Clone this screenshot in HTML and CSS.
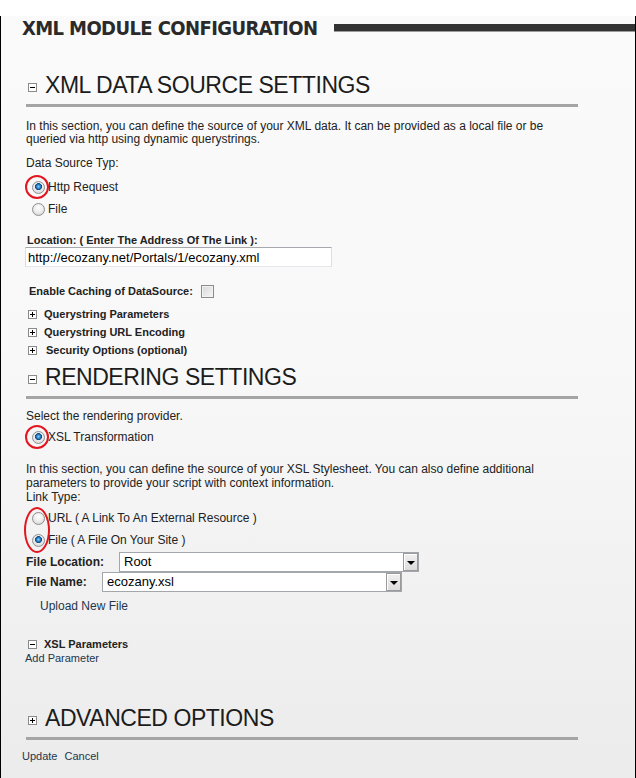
FILE: index.html
```html
<!DOCTYPE html>
<html>
<head>
<meta charset="utf-8">
<link rel="stylesheet" href="styles.css">
</head>
<body>
<div class="page">
  <div class="header">
    <h1 class="title">XML MODULE CONFIGURATION</h1>
    <div class="bar"></div>
  </div>
  <div class="content">
    <h2 class="section-head head-1"><svg class="tog-head" width="9" height="9" viewBox="0 0 9 9"><rect x="0.5" y="0.5" width="8" height="8" fill="#fff" stroke="#8a8a8a"/><path d="M2 4.5H7" stroke="#000"/></svg>XML DATA SOURCE SETTINGS</h2>

    <p class="para para-1">In this section, you can define the source of your XML data. It can be provided as a local file or be<br>queried via http using dynamic querystrings.</p>
    <div class="line type-label">Data Source Typ:</div>
    <div class="radio-group group-1">
      <div class="radio-row"><span class="radio on"></span><span class="radio-label">Http Request</span></div>
      <div class="radio-row"><span class="radio"></span><span class="radio-label">File</span></div>
      <span class="ring ring-1"></span>
    </div>

    <div class="field-label">Location: ( Enter The Address Of The Link ):</div>
    <input class="text-input" type="text" value="http://ecozany.net/Portals/1/ecozany.xml">

    <div class="cache-row"><span>Enable Caching of DataSource:</span><span class="checkbox"></span></div>

    <div class="toggle-row first-toggle"><svg class="tog" width="9" height="9" viewBox="0 0 9 9"><rect x="0.5" y="0.5" width="8" height="8" fill="#fff" stroke="#8a8a8a"/><path d="M2 4.5H7M4.5 2V7" stroke="#000"/></svg>Querystring Parameters</div>
    <div class="toggle-row"><svg class="tog" width="9" height="9" viewBox="0 0 9 9"><rect x="0.5" y="0.5" width="8" height="8" fill="#fff" stroke="#8a8a8a"/><path d="M2 4.5H7M4.5 2V7" stroke="#000"/></svg>Querystring URL Encoding</div>
    <div class="toggle-row"><svg class="tog" width="9" height="9" viewBox="0 0 9 9"><rect x="0.5" y="0.5" width="8" height="8" fill="#fff" stroke="#8a8a8a"/><path d="M2 4.5H7M4.5 2V7" stroke="#000"/></svg><span class="sec-text">Security Options (optional)</span></div>

    <h2 class="section-head head-2"><svg class="tog-head" width="9" height="9" viewBox="0 0 9 9"><rect x="0.5" y="0.5" width="8" height="8" fill="#fff" stroke="#8a8a8a"/><path d="M2 4.5H7" stroke="#000"/></svg>RENDERING SETTINGS</h2>

    <div class="line provider">Select the rendering provider.</div>
    <div class="radio-group group-2">
      <div class="radio-row"><span class="radio on"></span><span class="radio-label">XSL Transformation</span></div>
      <span class="ring ring-2"></span>
    </div>

    <p class="para para-2">In this section, you can define the source of your XSL Stylesheet. You can also define additional<br>parameters to provide your script with context information.</p>
    <div class="line link-type">Link Type:</div>
    <div class="radio-group group-3">
      <div class="radio-row"><span class="radio"></span><span class="radio-label">URL ( A Link To An External Resource )</span></div>
      <div class="radio-row"><span class="radio on"></span><span class="radio-label">File ( A File On Your Site )</span></div>
      <span class="ring ring-3"></span>
    </div>

    <div class="select-row row-loc">
      <span class="select-label loc-label">File Location:</span>
      <div class="select"><span class="select-text">Root</span><span class="select-btn"><span class="arrow"></span></span></div>
    </div>
    <div class="select-row row-name">
      <span class="select-label name-label">File Name:</span>
      <div class="select"><span class="select-text">ecozany.xsl</span><span class="select-btn"><span class="arrow"></span></span></div>
    </div>

    <a class="link upload">Upload New File</a>

    <div class="toggle-row xsl-params"><svg class="tog" width="9" height="9" viewBox="0 0 9 9"><rect x="0.5" y="0.5" width="8" height="8" fill="#fff" stroke="#8a8a8a"/><path d="M2 4.5H7" stroke="#000"/></svg>XSL Parameters</div>
    <a class="link add-param">Add Parameter</a>

    <h2 class="section-head head-3"><svg class="tog-head" width="9" height="9" viewBox="0 0 9 9"><rect x="0.5" y="0.5" width="8" height="8" fill="#fff" stroke="#8a8a8a"/><path d="M2 4.5H7M4.5 2V7" stroke="#000"/></svg>ADVANCED OPTIONS</h2>

    <div class="actions"><a class="link">Update</a><a class="link">Cancel</a></div>
  </div>
</div>
</body>
</html>
```

FILE: styles.css
```css
html, body {
  margin: 0;
  padding: 0;
  overflow: hidden;
}

.page {
  width: 636px;
  height: 778px;
  box-sizing: border-box;
  border: 1px solid #000;
  border-top: none;
  background: linear-gradient(#fafafa 0%, #f8f8f8 45%, #ebebeb 100%);
  font-family: "Liberation Sans", Arial, sans-serif;
  font-size: 12px;
  color: #222;
}

.header {
  display: flex;
  align-items: center;
  height: 24px;
  margin-top: 16px;
  padding-left: 21px;
}

.title {
  margin: 0;
  font-family: "DejaVu Sans Condensed", "DejaVu Sans", sans-serif;
  font-weight: bold;
  font-size: 20px;
  line-height: 24px;
  letter-spacing: -0.6px;
  color: #2a2a2a;
  white-space: nowrap;
}

.bar {
  flex: 1;
  height: 7px;
  background: #333;
  border-bottom: 1px solid #9a9a9a;
  margin-left: 17px;
}

.content {
  padding-left: 25px;
}

.section-head {
  margin: 0;
  width: 552px;
  font-family: "Liberation Sans", Arial, sans-serif;
  font-weight: normal;
  font-size: 23px;
  line-height: 28px;
  letter-spacing: -0.45px;
  color: #1c1c1c;
  padding-bottom: 5px;
  border-bottom: 3px solid #a5a5a5;
  white-space: nowrap;
}

.tog-head {
  vertical-align: 1px;
  margin-left: 2px;
  margin-right: 8px;
}

.head-1 { margin-top: 31px; }
.head-2 { margin-top: 4px; }
.head-3 { margin-top: 39px; }

.para {
  margin: 0;
  line-height: 13px;
  color: #222;
}

.para-1 { margin-top: 13px; }
.para-2 { margin-top: 14px; line-height: 14px; }

.line {
  line-height: 13px;
}

.type-label { margin-top: 11px; }
.provider { margin-top: 11px; }
.link-type { line-height: 14px; }

.radio-group {
  position: relative;
}

.group-1 { margin-top: 6px; }
.group-2 { margin-top: 3px; }
.group-3 { margin-top: 3px; }

.radio-row {
  display: flex;
  align-items: center;
  height: 22px;
}

.radio {
  width: 13px;
  height: 13px;
  box-sizing: border-box;
  margin-left: 6px;
  margin-right: 3px;
  border-radius: 50%;
  border: 1px solid #8d8f90;
  background: radial-gradient(circle at 50% 35%, #ffffff 0, #eeeeee 45%, #cfcfcf 100%);
}

.radio.on {
  background:
    radial-gradient(circle at 50% 42%, #8fd0fa 0, #2a86cf 1.8px, #12487c 3.2px, rgba(18,72,124,0) 3.8px),
    radial-gradient(circle at 50% 35%, #ffffff 0, #eeeeee 45%, #cfcfcf 100%);
}

.radio-label {
  font-size: 12px;
}

.ring {
  position: absolute;
  box-sizing: border-box;
  border: 2px solid #e2161f;
  border-radius: 50%;
}

.ring-1 { left: -1px; top: -1px; width: 24px; height: 24px; }
.ring-2 { left: -1px; top: -1px; width: 24px; height: 24px; }
.ring-3 { left: -2px; top: 0; width: 26px; height: 46px; }

.field-label {
  margin-top: 14px;
  padding-left: 1px;
  font-weight: bold;
  font-size: 11px;
  line-height: 13px;
  color: #222;
}

.text-input {
  display: block;
  width: 307px;
  height: 20px;
  box-sizing: border-box;
  margin: 0 0 0 -1px;
  padding: 0 2px;
  border: 1px solid;
  border-color: #a6a8ad #dcdfe5 #e3e7ec #d8dbe0;
  background: #fff;
  font-family: "Liberation Sans", Arial, sans-serif;
  font-size: 13px;
  color: #000;
  outline: none;
}

.cache-row {
  display: flex;
  align-items: center;
  height: 16px;
  margin-top: 16px;
  padding-left: 3px;
  font-weight: bold;
  font-size: 11px;
  color: #222;
}

.checkbox {
  width: 13px;
  height: 13px;
  box-sizing: border-box;
  margin-left: 8px;
  border: 1px solid #8c8c8c;
  background: linear-gradient(135deg, #d8d8d8, #f6f6f6);
  box-shadow: inset 0 0 0 1px #f2f2f2;
}

.toggle-row {
  display: flex;
  align-items: center;
  height: 18px;
  font-weight: bold;
  font-size: 11px;
  color: #222;
}

.first-toggle { margin-top: 6px; }

.tog {
  flex: none;
  margin-left: 2px;
  margin-right: 7px;
}

.sec-text { margin-left: 2px; }

.select-row {
  display: flex;
  align-items: center;
  height: 20px;
}

.row-loc { margin-top: 1px; }

.select-label {
  font-weight: bold;
  font-size: 12px;
  color: #222;
}

.loc-label { width: 93px; }
.name-label { width: 76px; }

.select {
  display: flex;
  align-items: stretch;
  width: 300px;
  height: 20px;
  box-sizing: border-box;
  border: 1px solid #a3a6aa;
  background: #fff;
}

.select-text {
  flex: 1;
  padding-left: 4px;
  font-size: 13px;
  line-height: 18px;
  color: #000;
}

.select-btn {
  display: flex;
  align-items: center;
  justify-content: center;
  width: 15px;
  box-sizing: border-box;
  border: 1px solid #9a9a9a;
  background: linear-gradient(#f0f0f0, #dcdcdc);
  box-shadow: inset 1px 1px 0 #fff;
}

.arrow {
  width: 0;
  height: 0;
  border-left: 4px solid transparent;
  border-right: 4px solid transparent;
  border-top: 4px solid #000;
  margin-top: 1px;
}

.link {
  display: block;
  color: #23364d;
  text-decoration: none;
  cursor: pointer;
}

.upload {
  margin-top: 8px;
  padding-left: 14px;
  font-size: 12px;
  line-height: 13px;
}

.xsl-params {
  height: 16px;
  margin-top: 23px;
}

.add-param {
  margin-left: -1px;
  font-size: 11px;
  line-height: 13px;
}

.actions {
  display: flex;
  gap: 7px;
  margin-top: 10px;
  margin-left: -4px;
  font-size: 11px;
  line-height: 13px;
}
```
